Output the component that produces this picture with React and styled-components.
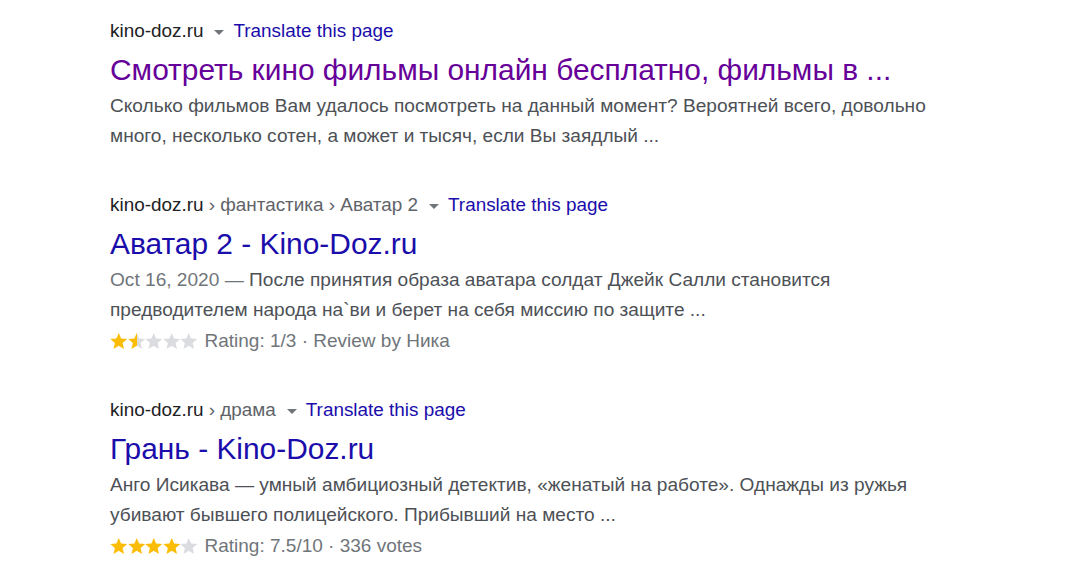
import React from "react";
import styled, { createGlobalStyle } from "styled-components";

const Global = createGlobalStyle`
  html, body { margin: 0; padding: 0; background: #fff; }
  body { font-family: "Liberation Sans", Arial, sans-serif; }
`;

const Page = styled.div`
  padding: 16px 0 0 110px;
  display: flex;
  flex-direction: column;
  gap: 39px;
`;

const Result = styled.div`
  display: flex;
  flex-direction: column;
`;

const CiteRow = styled.div`
  display: flex;
  align-items: center;
  height: 30px;
  font-size: 18.9px;
  line-height: 30px;
  white-space: nowrap;
`;

const Host = styled.span`
  color: #202124;
`;

const Crumbs = styled.span`
  color: #5f6368;
`;

const Arrow = styled.span`
  display: inline-block;
  width: 0;
  height: 0;
  border-left: 5px solid transparent;
  border-right: 5px solid transparent;
  border-top: 5px solid #70757a;
  margin: 2px 9px 0 11px;
`;

const Translate = styled.a`
  color: #1a0dab;
  text-decoration: none;
`;

const Title = styled.h3`
  margin: 6px 0 0;
  font-weight: normal;
  font-size: 29.9px;
  line-height: 36px;
  color: ${(p) => (p.$visited ? "#660099" : "#1a0dab")};
  white-space: nowrap;
`;

const Snippet = styled.div`
  margin-top: 3px;
  font-size: 19.1px;
  line-height: 30px;
  color: #4d5156;
  white-space: nowrap;
`;

const DateText = styled.span`
  color: #70757a;
`;

const RatingRow = styled.div`
  display: flex;
  align-items: center;
  height: 30px;
  margin-top: 1px;
  font-size: 19px;
  line-height: 30px;
  color: #70757a;
  white-space: nowrap;
`;

const Stars = styled.span`
  display: inline-flex;
  margin-right: 7px;
`;

const STAR =
  "M8.75 0 L11.1 5.5 L17.2 6 L12.6 9.9 L14 16 L8.75 12.8 L3.5 16 L4.9 9.9 L0.3 6 L6.4 5.5 Z";

function Star({ fill, id }) {
  return (
    <svg width="17.5" height="16" viewBox="0 0 17.5 16">
      <defs>
        <linearGradient id={id} x1="0" x2="1" y1="0" y2="0">
          <stop offset={fill} stopColor="#fbbc04" />
          <stop offset={fill} stopColor="#dadce0" />
        </linearGradient>
      </defs>
      <path d={STAR} fill={`url(#${id})`} />
    </svg>
  );
}

function StarBar({ value, uid }) {
  return (
    <Stars>
      {[0, 1, 2, 3, 4].map((i) => (
        <Star
          key={i}
          id={`${uid}-${i}`}
          fill={Math.max(0, Math.min(1, value - i))}
        />
      ))}
    </Stars>
  );
}

export default function App() {
  return (
    <>
      <Global />
      <Page>
        <Result>
          <CiteRow>
            <Host>kino-doz.ru</Host>
            <Arrow />
            <Translate>Translate this page</Translate>
          </CiteRow>
          <Title $visited>Смотреть кино фильмы онлайн бесплатно, фильмы в ...</Title>
          <Snippet>
            Сколько фильмов Вам удалось посмотреть на данный момент? Вероятней всего, довольно
            <br />
            много, несколько сотен, а может и тысяч, если Вы заядлый ...
          </Snippet>
        </Result>

        <Result>
          <CiteRow>
            <Host>kino-doz.ru</Host>
            <Crumbs>&nbsp;› фантастика › Аватар 2</Crumbs>
            <Arrow />
            <Translate>Translate this page</Translate>
          </CiteRow>
          <Title>Аватар 2 - Kino-Doz.ru</Title>
          <Snippet>
            <DateText>Oct 16, 2020 — </DateText>После принятия образа аватара солдат Джейк Салли становится
            <br />
            предводителем народа на`ви и берет на себя миссию по защите ...
          </Snippet>
          <RatingRow>
            <StarBar value={1.5} uid="r1" />
            Rating: 1/3 · Review by Ника
          </RatingRow>
        </Result>

        <Result>
          <CiteRow>
            <Host>kino-doz.ru</Host>
            <Crumbs>&nbsp;› драма</Crumbs>
            <Arrow />
            <Translate>Translate this page</Translate>
          </CiteRow>
          <Title>Грань - Kino-Doz.ru</Title>
          <Snippet>
            Анго Исикава — умный амбициозный детектив, «женатый на работе». Однажды из ружья
            <br />
            убивают бывшего полицейского. Прибывший на место ...
          </Snippet>
          <RatingRow>
            <StarBar value={4} uid="r2" />
            Rating: 7.5/10 · 336 votes
          </RatingRow>
        </Result>
      </Page>
    </>
  );
}
